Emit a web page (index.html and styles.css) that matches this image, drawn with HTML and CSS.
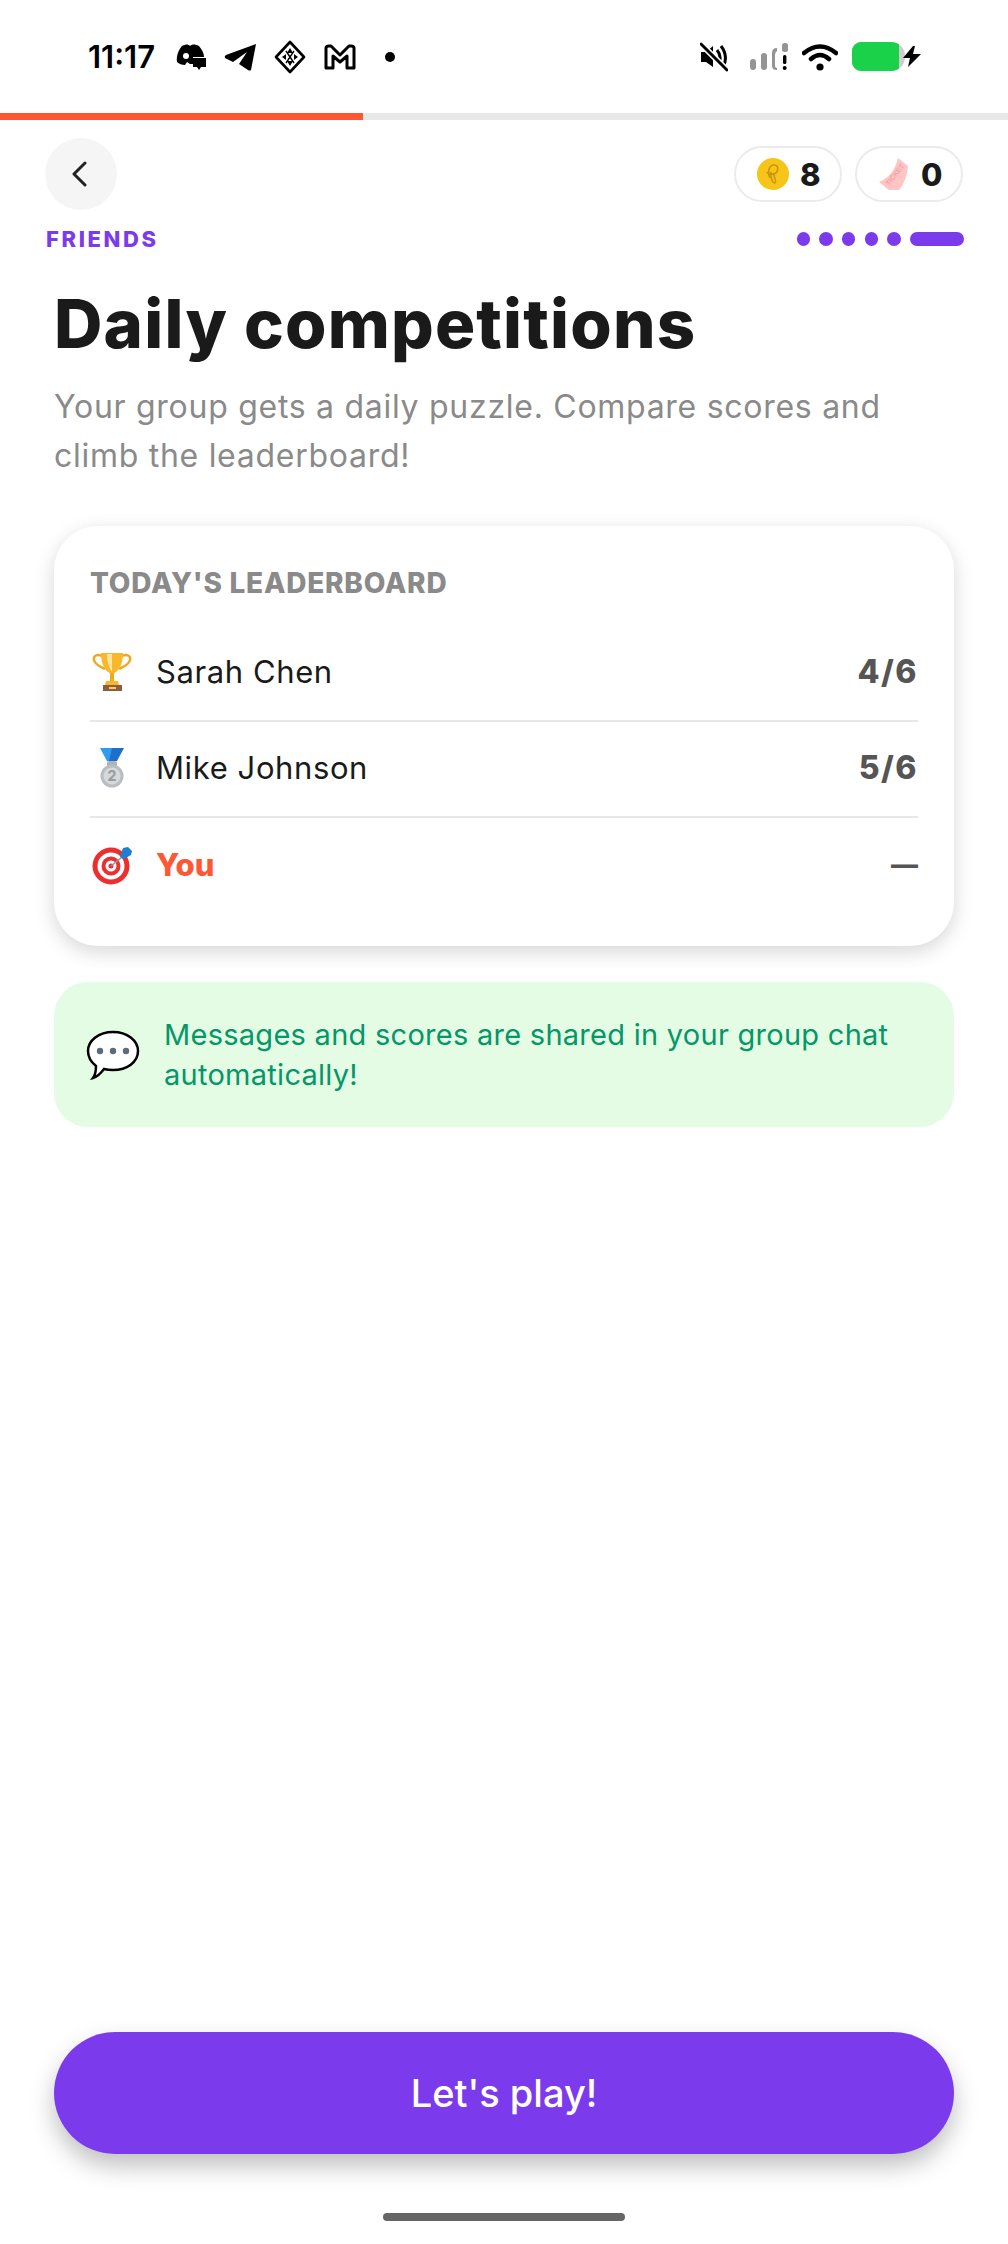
FILE: index.html
```html
<!DOCTYPE html>
<html lang="en">
<head>
    <meta charset="UTF-8">
    <meta name="viewport" content="width=device-width, initial-scale=1.0">
    <title>Daily competitions</title>
    <link rel="stylesheet" href="styles.css">
</head>
<body>
    <div class="screen">
        <div class="status-bar">
            <div class="status-left">
                <span class="time">11:17</span>
                <svg class="ic-discord" width="30" height="28" viewBox="0 0 30 28"><path d="M6 3 C10 1 12 1 14 3 C16 1 19 1 23 3 C26 7 28 10 28 14 L17 14 L17 21 L14 21 L11 19 L9 22 C6 22 3 21 1 19 C0 13 3 6 6 3 Z" fill="#000"/><circle cx="10" cy="13" r="3" fill="#fff"/><path d="M17 15 H30 V24 H25 L23 27 L21 24 H17 Z" fill="#000"/></svg>
                <svg width="32" height="28" viewBox="0 0 32 28"><path d="M32 1 L27 27 Q26 28 24 27 L15 21 L23 9 L9 19 L1 15 Q0 13 2 12 Z" fill="#000"/></svg>
                <svg class="ic-diamond" width="32" height="34" viewBox="0 0 32 34"><path d="M16 2 L30 17 L16 32 L2 17 Z" fill="none" stroke="#000" stroke-width="2.6" stroke-linejoin="round"/><path d="M16 8 L19 13 H13 Z M16 26 L13 21 H19 Z M8 17 L12 14 V20 Z M24 17 L20 14 V20 Z" fill="#000"/><path d="M12 11 L20 23 M20 11 L12 23" stroke="#000" stroke-width="1.4"/></svg>
                <svg width="32" height="26" viewBox="0 0 32 26"><path d="M2 24 V4 Q2 2 5 2 H7 L16 11 L25 2 H27 Q30 2 30 4 V24 H23 V12 L16 18 L9 12 V24 Z" fill="none" stroke="#000" stroke-width="3" stroke-linejoin="round"/></svg>
                <span class="notif-dot"></span>
            </div>
            <div class="status-right">
                <svg class="ic-mute" width="28" height="30" viewBox="0 0 28 30"><path d="M1 10 H6 L13 4 V25 L6 20 H1 Z" fill="#000"/><path d="M17 8 Q22 14 19 21 M21 4 Q28 13 24 23" fill="none" stroke="#000" stroke-width="3"/><path d="M1 2 L27 28" stroke="#fff" stroke-width="6"/><path d="M1 2 L27 28" stroke="#000" stroke-width="3" stroke-linecap="round"/></svg>
                <svg class="ic-signal" width="38" height="28" viewBox="0 0 38 28"><g fill="#949494"><rect x="0" y="16" width="6" height="11" rx="3"/><rect x="11" y="10" width="6" height="17" rx="3"/><path d="M27 27 Q22 27 22 23 V10 Q22 5 27 5 V8 Q25 9 25 12 V22 Q25 25 27 25 Z"/><rect x="32" y="0" width="6" height="9" rx="2.5"/></g><rect x="33" y="12" width="3.4" height="9" rx="1.5" fill="#000"/><circle cx="34.7" cy="25" r="2" fill="#000"/></svg>
                <svg class="ic-wifi" width="36" height="28" viewBox="0 0 36 28"><path d="M2 10 Q18 -3 34 10 M9 16 Q18 8 27 16" fill="none" stroke="#000" stroke-width="4.5" stroke-linecap="round"/><circle cx="18" cy="24" r="3.6" fill="#000"/></svg>
                <div class="battery"><div class="battery-fill"></div></div>
                <svg class="ic-bolt" width="18" height="21" viewBox="0 0 18 21"><path d="M10 0 L0 12 H7 L5 21 L18 8 H10 L12 0 Z" fill="#000"/></svg>
            </div>
        </div>

        <div class="progress"><div class="progress-fill"></div></div>

        <div class="top-row">
            <button class="back-btn">
                <svg width="16" height="26" viewBox="0 0 16 26"><path d="M14 2 L3 13 L14 24" fill="none" stroke="#222" stroke-width="3" stroke-linecap="round" stroke-linejoin="round"/></svg>
            </button>
            <div class="pills">
                <div class="pill">
                    <svg width="32" height="32" viewBox="0 0 32 32"><circle cx="16" cy="16" r="16" fill="#F7C518"/><path d="M13 20 C10 14 12 7 17 7 C22 7 22 14 17 16 C13 17 10 15 10 14 M14 14 C14 19 15 25 18 25 C20 24 17 18 16 15" fill="none" stroke="#C8960F" stroke-width="1.6"/></svg>
                    <span class="pill-num">8</span>
                </div>
                <div class="pill">
                    <svg width="32" height="32" viewBox="0 0 32 32"><path d="M20 0 L30 8 Q29 22 21 32 H11 L1 24 Q16 18 20 0 Z" fill="#FFC4C4"/><text class="ticket-text" x="0" y="0" transform="translate(11 28) rotate(-52)">TICKET</text></svg>
                    <span class="pill-num">0</span>
                </div>
            </div>
        </div>

        <div class="step-row">
            <span class="step-label">FRIENDS</span>
            <div class="dots">
                <span class="dot"></span>
                <span class="dot"></span>
                <span class="dot"></span>
                <span class="dot"></span>
                <span class="dot"></span>
                <span class="dot dot-active"></span>
            </div>
        </div>

        <div class="content">
            <h1>Daily competitions</h1>
            <p class="sub">Your group gets a daily puzzle. Compare scores and climb the leaderboard!</p>

            <div class="card">
                <div class="card-title">TODAY'S LEADERBOARD</div>
                <div class="row">
                    <svg class="row-icon" width="40" height="40" viewBox="0 0 40 40"><path d="M10 4 C3 1 0 6 3 10 C5 14 10 15 13 17 M30 4 C37 1 40 6 37 10 C35 14 30 15 27 17" fill="none" stroke="#F0A81E" stroke-width="2.4"/><path d="M9 1 H31 C31 12 27 20 20 22 C13 20 9 12 9 1 Z" fill="#F9B72B"/><path d="M15 2 H20 V20 C17 16 15 9 15 2 Z" fill="#FFE3A0"/><rect x="18" y="21" width="4" height="8" fill="#F0A81E"/><path d="M14 29 H26 L27 33 H13 Z" fill="#F9B72B"/><rect x="11" y="33" width="19" height="6" fill="#8B5E44"/><rect x="17" y="35" width="7" height="2" fill="#F9CF5B"/></svg>
                    <span class="row-name">Sarah Chen</span>
                    <span class="row-score">4/6</span>
                </div>
                <div class="row">
                    <svg class="row-icon" width="40" height="40" viewBox="0 0 40 40"><path d="M8 0 H20 L23 13 H15 Z" fill="#2E9BF0"/><path d="M32 0 H20 L17 13 H25 Z" fill="#1E6FC9"/><rect x="15" y="13" width="10" height="6" rx="2" fill="#AEB3B8"/><circle cx="20" cy="28" r="11.5" fill="#B9BDC2"/><circle cx="20" cy="28" r="8.5" fill="#D6D9DC"/><text class="medal-text" x="20" y="33" text-anchor="middle">2</text></svg>
                    <span class="row-name">Mike Johnson</span>
                    <span class="row-score">5/6</span>
                </div>
                <div class="row row-you">
                    <svg class="row-icon" width="40" height="40" viewBox="0 0 40 40"><circle cx="19" cy="21" r="18.5" fill="#EE2E2E"/><circle cx="19" cy="21" r="13.5" fill="#fff"/><circle cx="19" cy="21" r="9.5" fill="#EE2E2E"/><circle cx="19" cy="21" r="5.5" fill="#fff"/><circle cx="19" cy="21" r="2.5" fill="#EE2E2E"/><path d="M19 21 L34 9" stroke="#8A9AA8" stroke-width="1.6"/><path d="M28 12 L31 3 L36 2 L40 6 L39 10 L32 14 Z" fill="#1E7FD0"/></svg>
                    <span class="row-name">You</span>
                    <span class="row-score">—</span>
                </div>
            </div>

            <div class="note">
                <svg class="note-icon" width="54" height="50" viewBox="0 0 54 50"><path d="M27 2 C41 2 52 10 52 21 C52 32 41 40 27 40 C23 40 20 39.500 18 39 C15 43 11 47 7 48 C10 44 10 40 10 36 C5 32 2 27 2 21 C2 10 13 2 27 2 Z" fill="#fff" stroke="#000" stroke-width="2.500"/><circle cx="14" cy="21" r="3.200" fill="#5A6B7B"/><circle cx="27" cy="21" r="3.200" fill="#5A6B7B"/><circle cx="40" cy="21" r="3.200" fill="#5A6B7B"/></svg>
                <p class="note-text">Messages and scores are shared in your group chat automatically!</p>
            </div>
        </div>

        <div class="footer">
            <button class="play-btn">Let's play!</button>
            <div class="home-bar"></div>
        </div>
    </div>
</body>
</html>
```

FILE: styles.css
```css
* {
    box-sizing: border-box;
}

body {
    margin: 0;
    background-color: #fff;
    font-family: Inter, "Noto Sans", sans-serif;
    color: #1a1a1a;
}

.screen {
    display: flex;
    flex-direction: column;
    height: 2244px;
    overflow: hidden;
}

.status-bar {
    display: flex;
    justify-content: space-between;
    align-items: center;
    height: 113px;
    padding: 0 87px 0 88px;
}

.status-left,
.status-right {
    display: flex;
    align-items: center;
}

.status-left {
    gap: 18px;
}

.time {
    margin-right: 3px;
    font-size: 31px;
    font-weight: 600;
    color: #000;
}

.notif-dot {
    width: 10px;
    height: 10px;
    margin-left: 11px;
    border-radius: 50%;
    background-color: #000;
}

.ic-signal {
    margin-left: 22px;
}

.ic-wifi {
    margin-left: 14px;
}

.battery {
    width: 53px;
    height: 29px;
    margin-left: 14px;
    border-radius: 9px 14px 14px 9px;
    background-color: #ccc;
    overflow: hidden;
}

.battery-fill {
    width: 47px;
    height: 100%;
    background-color: #19d24a;
}

.ic-bolt {
    margin-left: -2px;
}

.progress {
    height: 7px;
    background-color: #e8e8e8;
}

.progress-fill {
    width: 363px;
    height: 100%;
    background-color: #ff5733;
}

.top-row {
    display: flex;
    justify-content: space-between;
    align-items: center;
    padding: 18px 45px 0;
}

.back-btn {
    display: flex;
    justify-content: center;
    align-items: center;
    width: 72px;
    height: 72px;
    padding: 0 4px 0 0;
    border: none;
    border-radius: 50%;
    background-color: #f5f5f5;
}

.pills {
    display: flex;
    gap: 13px;
}

.pill {
    display: flex;
    align-items: center;
    gap: 11px;
    width: 108px;
    height: 56px;
    padding-left: 21px;
    border: 2px solid #ebebeb;
    border-radius: 28px;
}

.pill-num {
    font-size: 31px;
    font-weight: 800;
    color: #1a1a1a;
}

.ticket-text {
    font-family: "Liberation Sans", sans-serif;
    font-size: 7px;
    font-weight: 700;
    fill: #f5a3a3;
}

.step-row {
    display: flex;
    justify-content: space-between;
    align-items: center;
    padding: 16px 44px 0 46px;
}

.step-label {
    font-size: 22px;
    line-height: 26px;
    font-weight: 800;
    letter-spacing: 2.6px;
    color: #7c3aed;
}

.dots {
    display: flex;
    gap: 9.400px;
}

.dot {
    width: 13.300px;
    height: 13.300px;
    border-radius: 7px;
    background-color: #7c3aed;
}

.dot-active {
    width: 54px;
}

.content {
    padding: 0 54px;
}

h1 {
    margin: 32px 0 0;
    font-size: 67px;
    line-height: 80px;
    font-weight: 800;
    letter-spacing: 1.2px;
    color: #1a1a1a;
}

.sub {
    margin: 18px 0 0;
    font-size: 32px;
    line-height: 49px;
    letter-spacing: 0.72px;
    color: #8a8a8a;
}

.card {
    margin-top: 46px;
    height: 420px;
    padding: 40px 36px 0;
    border-radius: 44px;
    background-color: #fff;
    box-shadow: 0 6px 20px rgba(0, 0, 0, 0.16);
}

.card-title {
    margin-bottom: 26px;
    font-size: 28px;
    line-height: 34px;
    font-weight: 800;
    letter-spacing: 0.75px;
    color: #8a8a8a;
}

.row {
    display: flex;
    align-items: center;
    height: 96px;
    padding-bottom: 3px;
    border-bottom: 2px solid #e8e8e8;
}

.row-you {
    border-bottom: none;
}

.row-icon {
    flex: none;
    margin-left: 2px;
}

.row-name {
    flex: 1;
    margin-left: 24px;
    font-size: 31px;
    letter-spacing: 0.6px;
    color: #1a1a1a;
}

.row-score {
    font-size: 32px;
    font-weight: 800;
    letter-spacing: 1.5px;
    color: #555;
}

.row-you .row-name {
    font-weight: 800;
    letter-spacing: 0;
    color: #ff5733;
}

.row-you .row-score {
    font-size: 27px;
    letter-spacing: 0;
}

.medal-text {
    font-family: Inter, sans-serif;
    font-size: 14px;
    font-weight: 800;
    fill: #9a9ea3;
}

.note {
    display: flex;
    align-items: center;
    gap: 24px;
    height: 145px;
    margin-top: 36px;
    padding: 0 32px;
    border-radius: 34px;
    background-color: #e3fce3;
}

.note-icon {
    flex: none;
}

.note-text {
    margin: 0;
    font-size: 29px;
    line-height: 40px;
    letter-spacing: 0.27px;
    color: #059669;
}

.footer {
    display: flex;
    flex-direction: column;
    align-items: center;
    margin-top: auto;
    padding: 0 54px 23px;
}

.play-btn {
    width: 100%;
    height: 122px;
    border: none;
    border-radius: 61px;
    background-color: #7c3aed;
    font-family: Inter, sans-serif;
    font-size: 38px;
    font-weight: 500;
    color: #fff;
    box-shadow: 0 12px 24px rgba(0, 0, 0, 0.25);
}

.home-bar {
    width: 242px;
    height: 8px;
    margin-top: 59px;
    border-radius: 4px;
    background-color: #666;
}
```
